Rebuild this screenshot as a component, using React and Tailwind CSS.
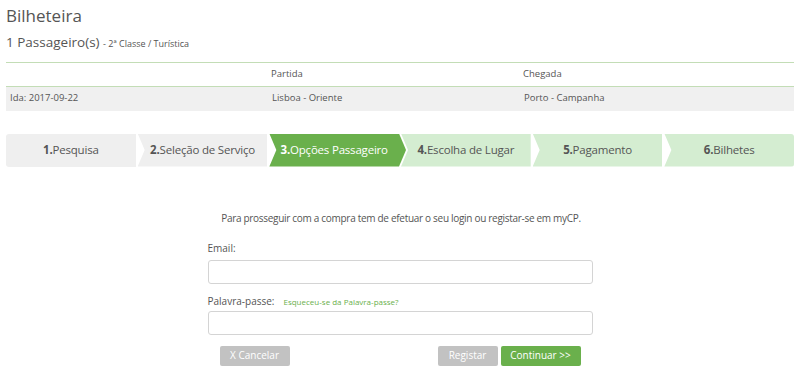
import React from "react";

const steps = [
  { n: "1.", label: "Pesquisa", state: "done" },
  { n: "2.", label: "Seleção de Serviço", state: "done" },
  { n: "3.", label: "Opções Passageiro", state: "active" },
  { n: "4.", label: "Escolha de Lugar", state: "todo" },
  { n: "5.", label: "Pagamento", state: "todo" },
  { n: "6.", label: "Bilhetes", state: "todo" },
];

function Step({ step, index }) {
  const first = index === 0;
  const last = index === steps.length - 1;
  const tone =
    step.state === "active"
      ? "bg-[#6ab04c] text-white"
      : step.state === "done"
      ? "bg-[#efefef] text-[#555]"
      : "bg-[#d4edd1] text-[#555]";
  return (
    <div className="relative flex-1">
      <div
        className={`h-[33px] flex items-center justify-center text-[11.5px] tracking-[-0.2px] ${tone} ${first ? "rounded-l-[3px]" : "[clip-path:polygon(0_0,100%_0,100%_100%,0_100%,7px_50%)]"} ${last ? "rounded-r-[3px]" : ""}`}
      >
        <span className="font-bold">{step.n}</span>
        <span>{step.label}</span>
      </div>
      {step.state === "active" && (
        <div className="absolute top-0 right-[-7px] w-[7px] h-[33px] bg-[#6ab04c] z-10 [clip-path:polygon(0_0,100%_50%,0_100%)]" />
      )}
    </div>
  );
}

export default function App() {
  return (
    <div className="w-[800px] h-[385px] bg-white text-[#555] font-['Open_Sans',sans-serif] px-[6px] overflow-hidden">
      <h1 className="text-[17px] leading-none pt-[7px] text-[#555]">Bilheteira</h1>
      <div className="mt-[12px] text-[13.5px] leading-none">
        1 Passageiro(s) <span className="text-[9px]">- 2ª Classe / Turística</span>
      </div>

      <div className="mt-[12px] border-t border-[#c3ddb6] text-[9.5px]">
        <div className="grid grid-cols-[261px_252px_1fr] h-[24px] items-center border-b border-[#c3ddb6]">
          <div />
          <div className="pl-[4px]">Partida</div>
          <div className="pl-[4px]">Chegada</div>
        </div>
        <div className="grid grid-cols-[261px_252px_1fr] h-[24px] items-center bg-[#f0f0f0]">
          <div className="pl-[4px]">Ida: 2017-09-22</div>
          <div className="pl-[5px]">Lisboa - Oriente</div>
          <div className="pl-[5px]">Porto - Campanha</div>
        </div>
      </div>

      <div className="mt-[23px] flex gap-[2px]">
        {steps.map((s, i) => (
          <Step key={s.n} step={s} index={i} />
        ))}
      </div>

      <p className="mt-[46px] text-center text-[10px] tracking-[-0.3px] leading-none pl-[2px]">
        Para prosseguir com a compra tem de efetuar o seu login ou registar-se em myCP.
      </p>

      <div className="w-[385px] mx-auto mt-[20px] text-[10px]">
        <label className="block leading-none">Email:</label>
        <input className="mt-[7px] block w-full h-[24px] border border-[#d4d4d4] rounded-[3px] bg-white" />

        <div className="mt-[12px] flex items-baseline leading-none">
          <span>Palavra-passe:</span>
          <span className="ml-[9px] text-[8px] text-[#6ab04c]">Esqueceu-se da Palavra-passe?</span>
        </div>
        <input type="password" className="mt-[5px] block w-full h-[24px] border border-[#d4d4d4] rounded-[3px] bg-white" />

        <div className="mt-[11px] flex items-center px-[12px]">
          <button className="h-[20px] w-[70px] bg-[#c2c2c2] text-white rounded-[2px] text-[10px]">X Cancelar</button>
          <div className="flex-1" />
          <button className="h-[20px] w-[60px] bg-[#c2c2c2] text-white rounded-[2px] text-[10px]">Registar</button>
          <button className="ml-[3px] h-[20px] w-[80px] bg-[#6ab04c] text-white rounded-[2px] text-[10px]">Continuar &gt;&gt;</button>
        </div>
      </div>
    </div>
  );
}
